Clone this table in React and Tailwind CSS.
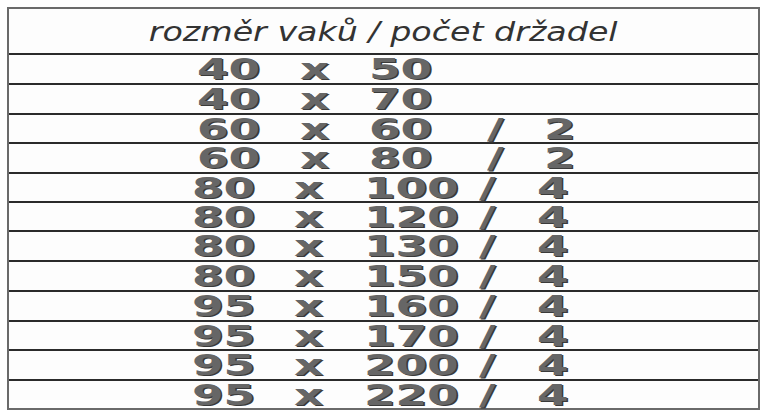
import React from 'react';

const rows = [
  { h: 'h-[30px]', pad: 'pl-[188px]', cells: ['40', 'x', '50'] },
  { h: 'h-[30px]', pad: 'pl-[188px]', cells: ['40', 'x', '70'] },
  { h: 'h-[29px]', pad: 'pl-[188px]', cells: ['60', 'x', '60', '/', '2'] },
  { h: 'h-[30px]', pad: 'pl-[188px]', cells: ['60', 'x', '80', '/', '2'] },
  { h: 'h-[29px]', pad: 'pl-[183px]', cells: ['80', 'x', '100', '/', '4'] },
  { h: 'h-[29px]', pad: 'pl-[183px]', cells: ['80', 'x', '120', '/', '4'] },
  { h: 'h-[30px]', pad: 'pl-[183px]', cells: ['80', 'x', '130', '/', '4'] },
  { h: 'h-[30px]', pad: 'pl-[183px]', cells: ['80', 'x', '150', '/', '4'] },
  { h: 'h-[30px]', pad: 'pl-[183px]', cells: ['95', 'x', '160', '/', '4'] },
  { h: 'h-[29px]', pad: 'pl-[183px]', cells: ['95', 'x', '170', '/', '4'] },
  { h: 'h-[30px]', pad: 'pl-[183px]', cells: ['95', 'x', '200', '/', '4'] },
  { h: 'h-[29px]', pad: 'pl-[183px]', cells: ['95', 'x', '220', '/', '4'] },
];

// column widths: rows 1-4 use the wider "2" spacing, rows 5-12 the "4" layout
const narrowCols = ['w-[103px]', 'w-[69px]', 'w-[118px]', 'w-[57px]', 'w-[40px]'];
const wideCols = ['w-[102px]', 'w-[70px]', 'w-[115px]', 'w-[58px]', 'w-[40px]'];

const Cell = ({ width, text }) => (
  <span className={`${width} shrink-0 flex items-center`}>
    <span className="inline-block origin-left scale-x-[1.62] text-[28px] leading-[22px] font-bold text-[#666] [text-shadow:1px_1px_0_#3a3a3a]">
      {text}
    </span>
  </span>
);

export default function App() {
  return (
    <div className="w-[768px] h-[418px] bg-white pt-[7px] pl-[7px] font-['DejaVu_Sans',sans-serif]">
      <div className="w-[753px] border-2 border-[#6a6a6a] bg-[#fdfdfd]">
        {/* header */}
        <div className="h-[44px] flex items-center justify-center">
          <span className="inline-block scale-x-[1.28] text-[26px] italic text-[#333] leading-none pt-[2px]">
            rozměr vaků / počet držadel
          </span>
        </div>

        {rows.map((row, i) => {
          const cols = row.pad === 'pl-[188px]' ? narrowCols : wideCols;
          return (
            <div
              key={i}
              className={`${row.h} ${row.pad} flex items-center border-t-2 border-[#2b2b2b] pt-[2px]`}
            >
              {row.cells.map((c, j) => (
                <Cell key={j} width={cols[j]} text={c} />
              ))}
            </div>
          );
        })}
      </div>
    </div>
  );
}
